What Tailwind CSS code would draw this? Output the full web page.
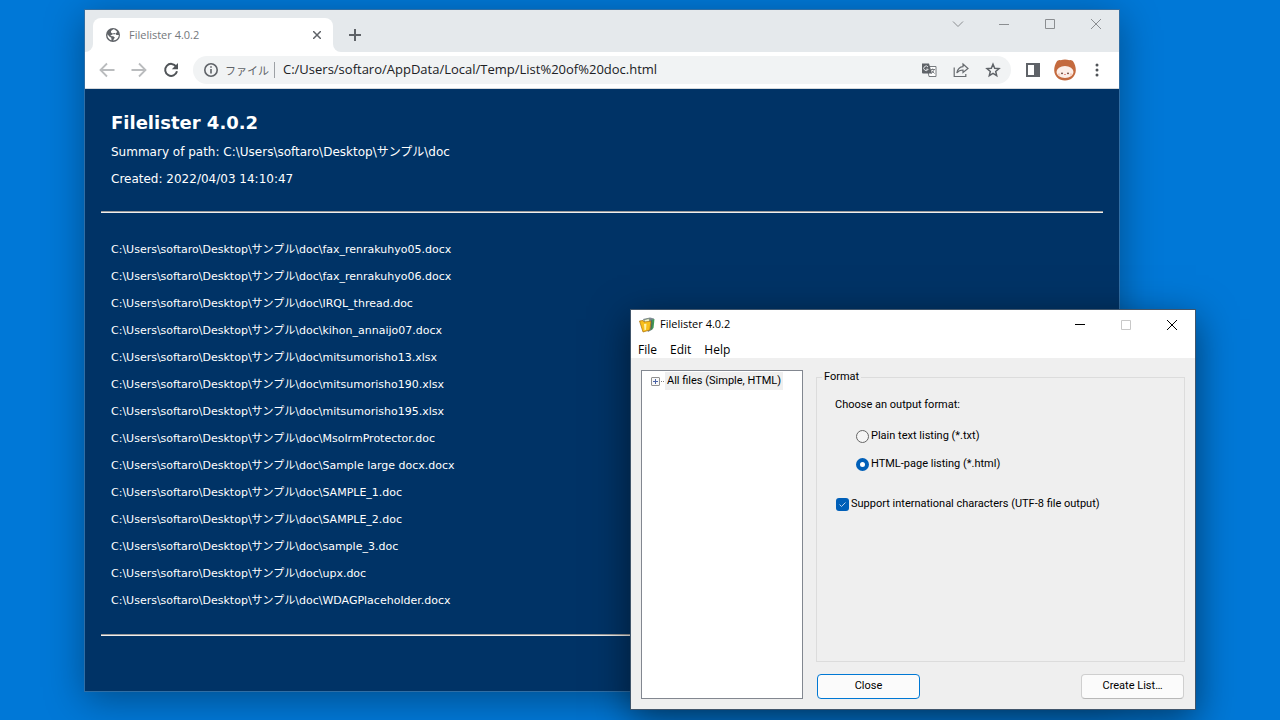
<!DOCTYPE html>
<html lang="ja">
<head>
<meta charset="utf-8">
<title>Filelister 4.0.2</title>
<script src="https://cdn.jsdelivr.net/npm/@tailwindcss/browser@4"></script>
</head>
<body class="relative h-screen min-h-[720px] overflow-hidden bg-[#0078d7] font-['Open_Sans','Noto_Sans_CJK_JP',sans-serif]">

<!-- Browser window -->
<main class="absolute top-[9px] left-[84px] right-[160px] flex flex-col border border-[#2f6ea5] bg-white shadow-[0_8px_36px_rgba(0,0,0,0.35)]">
  <header class="flex h-[42px] items-start bg-[#e5e9ec]">
    <div class="flex w-2 items-end self-stretch"><div class="size-2 bg-white"><div class="size-2 rounded-br-lg bg-[#e5e9ec]"></div></div></div>
    <div class="mt-2 flex h-[34px] w-60 items-center rounded-t-lg bg-white pr-2 pl-3">
      <svg class="size-4" viewBox="0 0 16 16"><circle cx="8" cy="8" r="7" fill="#5f6368"/><path d="M8.300 2.200 6 3.900v1.600l1.400.9 2.600-.3.600 1.200H7.600L5.200 9l3 .3 1.600 1.200-1.700 2.900c3.300 0 5.700-2.600 5.700-5.400l-2.400-.1-.8-1.300 1.600-1.500C11.400 3.400 10 2.500 8.300 2.200zM2.500 7.200c-.4 2.700 1.400 5.300 4 6l-.2-2.400-2-1.300z" fill="#fff"/></svg>
      <span class="ml-2 flex-1 pt-px text-[11px] text-[#74787c]">Filelister 4.0.2</span>
      <button aria-label="Close tab" class="grid size-4 place-items-center"><svg class="size-2" viewBox="0 0 8 8" stroke="#5f6368" stroke-width="1.500"><path d="M0 0l8 8M8 0L0 8"/></svg></button>
    </div>
    <div class="flex w-2 items-end self-stretch"><div class="size-2 bg-white"><div class="size-2 rounded-bl-lg bg-[#e5e9ec]"></div></div></div>
    <button aria-label="New tab" class="mt-[17px] ml-[6px] grid size-4 place-items-center"><svg class="size-3" viewBox="0 0 12 12" stroke="#5f6368" stroke-width="2"><path d="M6 0v12M0 6h12"/></svg></button>
    <div class="ml-auto flex">
      <button aria-label="Search tabs" class="grid h-7 w-[46px] place-items-center"><svg class="size-3" viewBox="0 0 12 12" fill="none" stroke="#8b8e91"><path d="M1 3.500l5 5 5-5"/></svg></button>
      <button aria-label="Minimize" class="grid h-7 w-[46px] place-items-center"><svg class="size-3" viewBox="0 0 12 12" stroke="#8b8e91"><path d="M1 6.500h10"/></svg></button>
      <button aria-label="Maximize" class="grid h-7 w-[46px] place-items-center"><svg class="size-3" viewBox="0 0 12 12" fill="none" stroke="#8b8e91"><path d="M1.500 1.500h9v9h-9z"/></svg></button>
      <button aria-label="Close" class="grid h-7 w-[46px] place-items-center"><svg class="size-3" viewBox="0 0 12 12" stroke="#8b8e91"><path d="M1 1l10 10M11 1L1 11"/></svg></button>
    </div>
  </header>

  <nav class="flex h-[37px] items-center border-b border-[#d5d8db] bg-white px-[14px]">
    <button aria-label="Back" class="mr-4"><svg class="size-4" viewBox="0 0 16 16" fill="none" stroke="#babcbe" stroke-width="1.800"><path d="M15.500 8H2M8 1.500L1.500 8 8 14.500"/></svg></button>
    <button aria-label="Forward" class="mr-4"><svg class="size-4" viewBox="0 0 16 16" fill="none" stroke="#babcbe" stroke-width="1.800"><path d="M.5 8H14M8 1.500L14.500 8 8 14.500"/></svg></button>
    <button aria-label="Reload" class="mr-[14px]"><svg class="size-4" viewBox="0 0 16 16" fill="none"><path d="M13.200 4.600A6 6 0 1 0 14 9.300" stroke="#505458" stroke-width="2"/><path d="M15 1v6.200H8.800z" fill="#505458"/></svg></button>
    <div class="flex h-7 flex-1 items-center rounded-full bg-[#f1f3f4] px-[10px]">
      <svg class="size-4" viewBox="0 0 16 16" fill="none" stroke="#5f6368" stroke-width="1.600"><circle cx="8" cy="8" r="6.200"/><path d="M8 7v4.500M8 4.200v1.600"/></svg>
      <label for="url" class="ml-[6px] w-11 font-['Noto_Sans_CJK_JP',sans-serif] text-[11px] whitespace-nowrap text-[#5f6368]">ファイル</label>
      <span class="ml-[5px] h-4 w-px bg-[#9da1a5]"></span>
      <input id="url" type="text" value="C:/Users/softaro/AppData/Local/Temp/List%20of%20doc.html" class="ml-2 min-w-0 flex-1 bg-transparent text-[13px] text-[#202124] outline-none">
      <div class="flex gap-4">
        <button aria-label="Translate"><svg class="size-4" viewBox="0 0 16 16"><path d="M6 4.500h9v10H8z" fill="#fff" stroke="#777b7f"/><path d="M1 1.500h7l3 10H2a1 1 0 0 1-1-1z" fill="#5f6368"/><path d="M7 5a2.300 2.300 0 1 0 .2 2.200H5.200" stroke="#e8eaed" stroke-width="1" fill="none"/><path d="M9.500 7.500h4.500M11.700 6.500v1M13 7.500c-.3 1.500-1.300 3-2.500 4M10.700 8.500l2.800 3" stroke="#777b7f" fill="none"/></svg></button>
        <button aria-label="Share"><svg class="size-4" viewBox="0 0 16 16" fill="none" stroke="#686c70" stroke-width="1.200"><path d="M1.200 5.500v9h11.600V12"/><path d="M10 2l5 4.500-5 4V8C7.500 8 5.500 8.800 3.800 11 4.500 7.500 6.300 5 10 4.700z"/></svg></button>
        <button aria-label="Bookmark"><svg class="size-4" viewBox="0 0 16 16" fill="none" stroke="#5f6368" stroke-width="1.500"><path d="M8 2.200l1.700 4 4.300.4-3.300 2.800 1 4.200L8 11.400l-3.700 2.200 1-4.200L2 6.600l4.300-.4z"/></svg></button>
      </div>
    </div>
    <button aria-label="Side panel" class="ml-[14px]"><svg class="size-4" viewBox="0 0 16 16"><path d="M1 1h14v14H1z" fill="#5f6368"/><path d="M3 3h6v10H3z" fill="#fff"/></svg></button>
    <button aria-label="Profile" class="ml-[13px]"><svg class="size-[22px]" viewBox="0 0 22 22"><path d="M2.500 3C3.500 1.500 5 .8 6.500 1.200 9.500.3 12.500.3 15.500 1.200 17 .8 18.500 1.500 19.500 3c1 1.500 2.500 5 2.300 8.500C21.500 17.500 17 21.500 11 21.500S.5 17.500.2 11.500C0 8 1.500 4.500 2.500 3z" fill="#c46a3e"/><ellipse cx="11" cy="13" rx="8.500" ry="6" fill="#fbeee8"/><circle cx="8" cy="14.300" r=".9" fill="#5f3326"/><circle cx="14" cy="14.300" r=".9" fill="#5f3326"/><circle cx="5" cy="15.500" r="1.300" fill="#f6cfc0"/><circle cx="17" cy="15.500" r="1.300" fill="#f6cfc0"/><path d="M10.300 15.500h1.400" stroke="#dc6a5d"/></svg></button>
    <button aria-label="Menu" class="ml-[13px]"><svg class="size-4" viewBox="0 0 16 16" fill="#505458"><circle cx="8" cy="3" r="1.500"/><circle cx="8" cy="8" r="1.500"/><circle cx="8" cy="13" r="1.500"/></svg></button>
  </nav>

  <article class="bg-[#003366] px-4 pt-5 pb-[55px] font-['DejaVu_Sans','Noto_Sans_CJK_JP',sans-serif] text-white">
    <div class="px-[10px]">
      <h1 class="mb-[3px] text-lg leading-[27px] font-bold">Filelister 4.0.2</h1>
      <p class="text-xs leading-[27px]">Summary of path: C:\Users\softaro\Desktop\サンプル\doc</p>
      <p class="text-xs leading-[27px]">Created: 2022/04/03 14:10:47</p>
    </div>
    <hr class="mt-[18px] border-t border-b border-t-[#9a9a9a] border-b-[#eeeeee]">
    <ul class="mt-[23px] mb-5 px-[10px] text-[11px] leading-[27px]">
      <li>C:\Users\softaro\Desktop\サンプル\doc\fax_renrakuhyo05.docx</li>
      <li>C:\Users\softaro\Desktop\サンプル\doc\fax_renrakuhyo06.docx</li>
      <li>C:\Users\softaro\Desktop\サンプル\doc\IRQL_thread.doc</li>
      <li>C:\Users\softaro\Desktop\サンプル\doc\kihon_annaijo07.docx</li>
      <li>C:\Users\softaro\Desktop\サンプル\doc\mitsumorisho13.xlsx</li>
      <li>C:\Users\softaro\Desktop\サンプル\doc\mitsumorisho190.xlsx</li>
      <li>C:\Users\softaro\Desktop\サンプル\doc\mitsumorisho195.xlsx</li>
      <li>C:\Users\softaro\Desktop\サンプル\doc\MsoIrmProtector.doc</li>
      <li>C:\Users\softaro\Desktop\サンプル\doc\Sample large docx.docx</li>
      <li>C:\Users\softaro\Desktop\サンプル\doc\SAMPLE_1.doc</li>
      <li>C:\Users\softaro\Desktop\サンプル\doc\SAMPLE_2.doc</li>
      <li>C:\Users\softaro\Desktop\サンプル\doc\sample_3.doc</li>
      <li>C:\Users\softaro\Desktop\サンプル\doc\upx.doc</li>
      <li>C:\Users\softaro\Desktop\サンプル\doc\WDAGPlaceholder.docx</li>
    </ul>
    <hr class="border-t border-b border-t-[#9a9a9a] border-b-[#eeeeee]">
  </article>
</main>

<!-- Filelister dialog -->
<section class="absolute top-[309px] right-[84px] flex w-[566px] flex-col border border-[#40556b] bg-[#efefef] text-black shadow-[0_10px_36px_rgba(0,0,0,0.5)]">
  <header class="flex h-[29px] items-center bg-white pl-2">
    <svg class="size-4" viewBox="0 0 16 16"><path d="M4 2l7-1.500 4 1-1.500 11L9 15z" fill="#7d8b94"/><path d="M5 3l5-1.500 1 5-5 1z" fill="#eef4d5" stroke="#6b7a55" stroke-width=".5"/><path d="M12.500 3l3-1-1 9-3 2.500z" fill="#3e9a55"/><path d="M.5 4L4 3.500l1 1.500 7-.8-1.200 8.800L4 15z" fill="#f8bf1c" stroke="#a96f08" stroke-width=".7"/><path d="M5 7l2.500-.3-.5 6-1.500.5z" fill="#fff2a8"/><path d="M12 2.500l1 4-1 6" fill="none" stroke="#4c5862" stroke-width=".7"/></svg>
    <h2 class="ml-[5px] flex-1 text-[11px]">Filelister 4.0.2</h2>
    <button aria-label="Minimize" class="grid h-[27px] w-[46px] place-items-center"><svg class="size-3" viewBox="0 0 12 12" stroke="#000"><path d="M1 5.500h10"/></svg></button>
    <button aria-label="Maximize" disabled class="grid h-[27px] w-[46px] place-items-center"><svg class="size-3" viewBox="0 0 12 12" fill="none" stroke="#c8c8c8"><path d="M1.500 1.500h9v9h-9z"/></svg></button>
    <button aria-label="Close" class="grid h-[27px] w-[46px] place-items-center"><svg class="size-3" viewBox="0 0 12 12" stroke="#000"><path d="M1 1l10 10M11 1L1 11"/></svg></button>
  </header>
  <nav class="flex h-[19px] gap-[13px] bg-white pt-px pl-[7px] text-xs leading-[20px]">
    <button>File</button><button>Edit</button><button>Help</button>
  </nav>
  <div class="flex gap-[13px] px-[10px] pt-3 pb-[10px] font-['Roboto',sans-serif] text-[11px]">
    <div class="w-[162px] border border-[#828790] bg-white pt-px pl-[9px]">
      <div class="flex items-center">
        <button aria-label="Expand" class="grid size-[9px] place-items-center rounded-[1px] border border-[#919191] bg-[#f8f8f8]"><svg class="size-[5px]" viewBox="0 0 5 5" stroke="#4b63a7"><path d="M2.500 0v5M0 2.500h5"/></svg></button>
        <span class="ml-px w-[3px] border-t border-dotted border-[#808080]"></span>
        <span class="ml-px bg-[#efefef] px-[2px] leading-[18px] whitespace-nowrap">All files (Simple, HTML)</span>
      </div>
    </div>
    <div class="min-w-0 flex-1">
      <fieldset class="h-[292px] border border-[#dcdcdc] px-[18px]">
        <legend class="-ml-[13px] px-[2px] leading-[14px]">Format</legend>
        <p class="mt-[13px] leading-4">Choose an output format:</p>
        <div class="mt-[9px] flex flex-col pl-[21px]">
          <label class="flex h-7 items-center gap-[2px]"><input type="radio" name="format" class="size-[13px] appearance-none rounded-full border border-[#666] bg-[#f5f5f5] checked:border-4 checked:border-[#005fb8] checked:bg-white">Plain text listing (*.txt)</label>
          <label class="flex h-7 items-center gap-[2px]"><input type="radio" name="format" checked class="size-[13px] appearance-none rounded-full border border-[#666] bg-[#f5f5f5] checked:border-4 checked:border-[#005fb8] checked:bg-white">HTML-page listing (*.html)</label>
        </div>
        <label class="mt-3 ml-px flex h-7 items-center gap-[2px] whitespace-nowrap"><span class="grid"><input type="checkbox" checked class="col-start-1 row-start-1 size-[13px] appearance-none rounded-[3px] bg-[#005fb8]"><svg class="pointer-events-none col-start-1 row-start-1 size-[13px]" viewBox="0 0 13 13" fill="none" stroke="#b9d3ec"><path d="M3.500 6.500l2 2 4-4"/></svg></span>Support international characters (UTF-8 file output)</label>
      </fieldset>
      <div class="mt-3 flex justify-between px-px">
        <button class="h-[25px] w-[103px] rounded border border-[#0078d4] bg-[#fbfbfb]">Close</button>
        <button class="h-[25px] w-[103px] rounded border border-[#cfcfcf] border-b-[#b8b8b8] bg-[#fbfbfb]">Create List…</button>
      </div>
    </div>
  </div>
</section>
</body>
</html>
